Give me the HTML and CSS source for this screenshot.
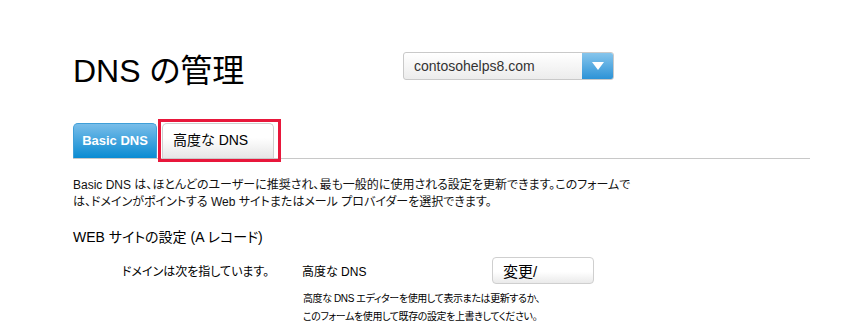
FILE: index.html
```html
<!DOCTYPE html>
<html lang="ja">
<head>
    <meta charset="UTF-8">
    <meta name="viewport" content="width=device-width, initial-scale=1.0">
    <title>DNS の管理</title>
    <link rel="stylesheet" href="styles.css">
</head>
<body>

    <div class="page">

        <!-- Title + domain picker -->
        <div class="header">
            <h1 class="title">DNS の管理</h1>
            <div class="domain-select">
                <span class="domain-name">contosohelps8.com</span>
                <span class="domain-arrow">
                    <svg width="12" height="8" viewBox="0 0 12 8"><polygon points="0,0 12,0 6,8" fill="#fff"/></svg>
                </span>
            </div>
        </div>

        <!-- Tabs -->
        <div class="tabs">
            <div class="tab active">Basic DNS</div>
            <div class="tab highlighted">高度な DNS</div>
        </div>

        <p class="intro">Basic DNS は、ほとんどのユーザーに推奨され、最も一般的に使用される設定を更新できます。このフォームで<br>は、ドメインがポイントする Web サイトまたはメール プロバイダーを選択できます。</p>

        <h2 class="section-title">WEB サイトの設定 (A レコード)</h2>

        <div class="setting-row">
            <div class="setting-label">ドメインは次を指しています。</div>
            <div class="setting-value">高度な DNS</div>
            <button class="change-btn">変更/</button>
        </div>

        <p class="note">高度な DNS エディターを使用して表示または更新するか、<br>このフォームを使用して既存の設定を上書きしてください。</p>

    </div>

</body>
</html>
```

FILE: styles.css
```css
body {
    margin: 0;
    background-color: #fff;
    color: #000;
    font-family: "Liberation Sans", Arial, "Noto Sans CJK JP", sans-serif;
    font-feature-settings: "palt";
}

.page {
    padding: 52px 0 0 73px;
}

.header {
    display: flex;
    align-items: flex-start;
}

.header .title {
    margin: 1px 0 0 0;
    width: 330px;
    font-size: 32px;
    line-height: 37px;
    font-weight: normal;
}

.domain-select {
    display: flex;
    width: 211px;
    height: 28px;
    box-sizing: border-box;
    border: 1px solid #c9c9c9;
    border-radius: 3px;
    background: linear-gradient(#ffffff, #ececec);
    overflow: hidden;
}

.domain-select .domain-name {
    flex: 1;
    padding-left: 10px;
    font-size: 14px;
    line-height: 26px;
    color: #333;
}

.domain-select .domain-arrow {
    width: 31px;
    display: flex;
    align-items: center;
    justify-content: center;
    background: linear-gradient(#86c5ec, #2d93d7);
}

/* tabs */
.tabs {
    display: flex;
    align-items: flex-end;
    gap: 5px;
    width: 737px;
    margin-top: 33px;
    border-bottom: 1px solid #c8c8c8;
}

.tab {
    height: 35px;
    box-sizing: border-box;
    border-radius: 5px 5px 0 0;
    line-height: 33px;
}

.tab.active {
    width: 84px;
    text-align: center;
    color: #fff;
    font-weight: bold;
    font-size: 13px;
    background: linear-gradient(#79bde9, #0a8bd2);
    border: 1px solid #3f9fd8;
    border-bottom: none;
}

.tab.highlighted {
    position: relative;
    width: 112px;
    padding-left: 10px;
    font-size: 14px;
    background: linear-gradient(#ffffff 40%, #e6e6e6);
    border: 1px solid #cfcfcf;
    border-bottom: none;
}

/* red annotation box around second tab */
.tab.highlighted::after {
    content: "";
    position: absolute;
    top: -5px;
    left: -5px;
    right: -8px;
    bottom: -4px;
    border: 3px solid #e8173b;
}

.intro {
    margin: 18px 0 0 0;
    font-size: 12px;
    line-height: 17px;
    color: #111;
}

.section-title {
    margin: 16px 0 0 0;
    font-size: 14px;
    line-height: 20px;
    font-weight: normal;
}

.setting-row {
    display: flex;
    align-items: center;
    margin-top: 10px;
    padding-left: 49px;
    height: 27px;
    font-size: 12px;
}

.setting-label {
    width: 180px;
}

.setting-value {
    width: 190px;
}

.change-btn {
    width: 102px;
    height: 27px;
    padding: 0 0 0 10px;
    text-align: left;
    font-family: inherit;
    font-size: 15px;
    color: #000;
    background: linear-gradient(#ffffff 55%, #eaeaea);
    border: 1px solid #cfcfcf;
    border-radius: 4px;
}

.note {
    margin: 6px 0 0 230px;
    font-size: 10px;
    line-height: 18px;
    letter-spacing: -0.4px;
}
```
